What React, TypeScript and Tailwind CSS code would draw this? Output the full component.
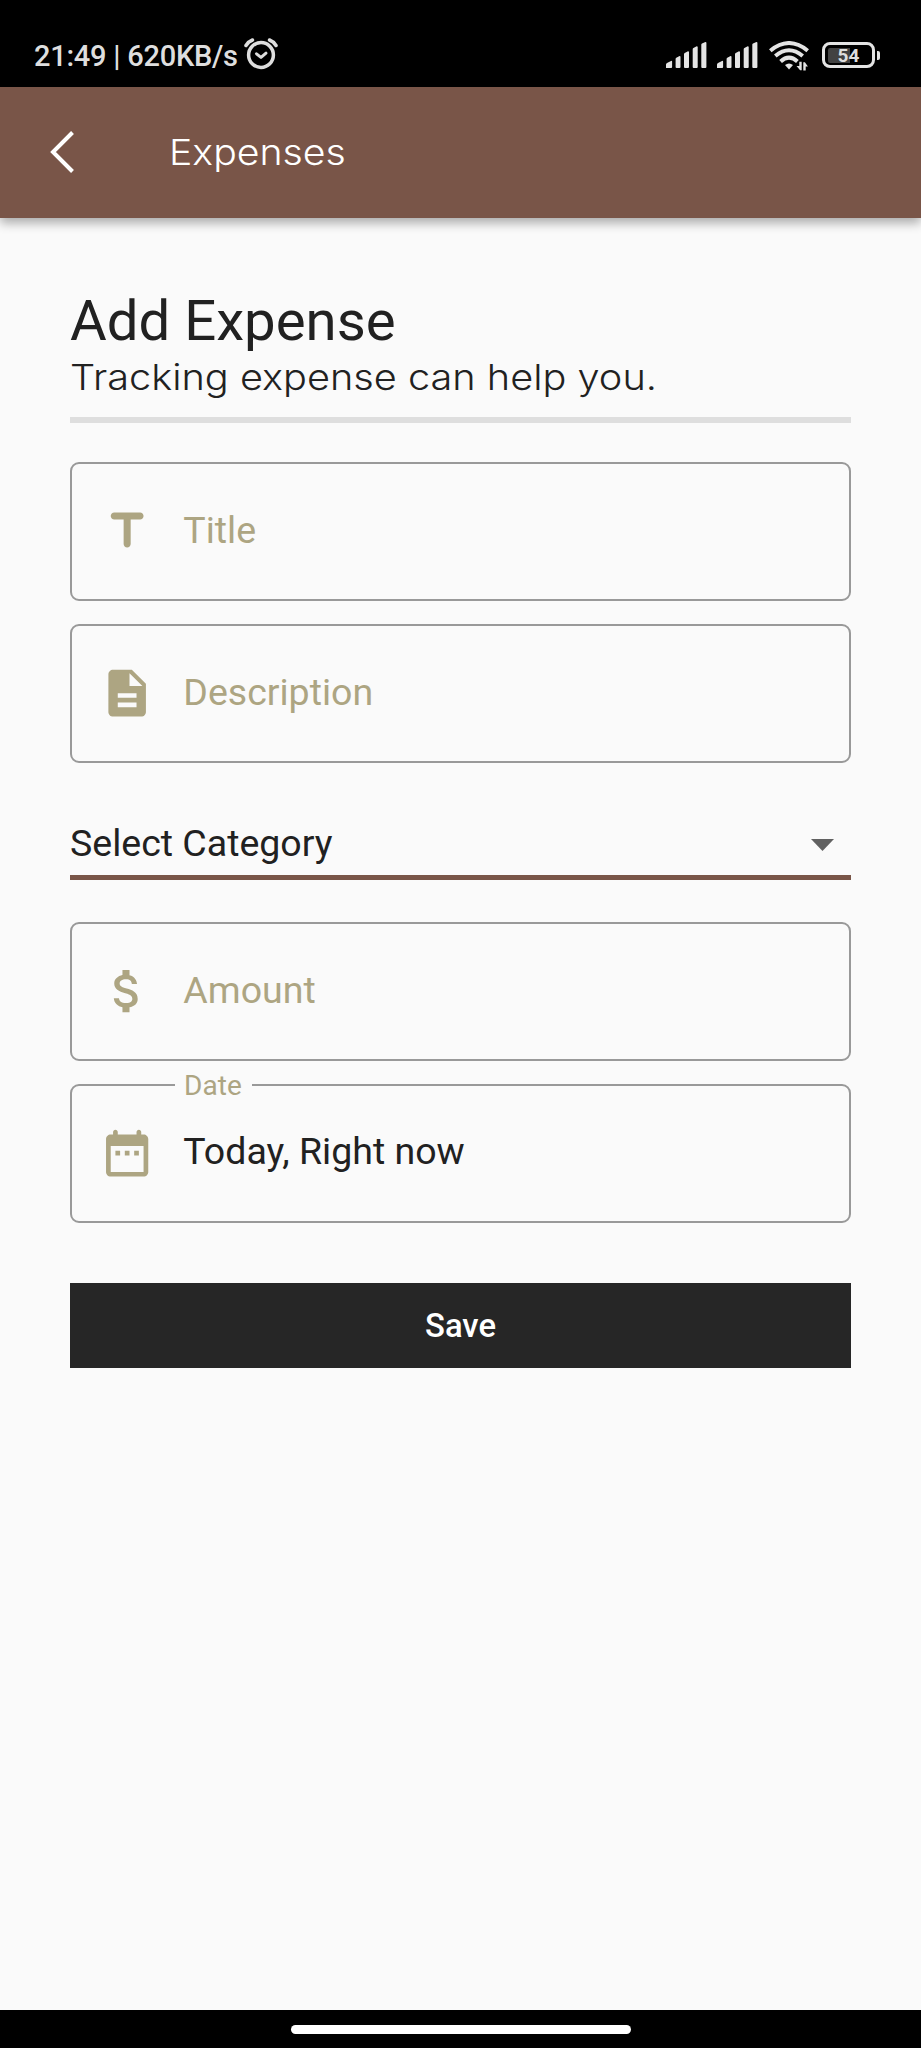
import type { ReactNode } from "react";
import { MdAttachMoney, MdDescription } from "react-icons/md";

function TitleIcon() {
  return (
    <svg viewBox="0 0 24 24" className="size-[56.3px]" fill="currentColor">
      <path d="M5 5.5C5 6.33 5.67 7 6.5 7h4v10.5c0 .83.67 1.5 1.5 1.5s1.5-.67 1.5-1.5V7h4c.83 0 1.5-.67 1.5-1.5S18.330 4 17.500 4h-11C5.670 4 5 4.670 5 5.500z" />
    </svg>
  );
}

function CalendarIcon() {
  return (
    <svg viewBox="0 0 24 24" className="size-[56.3px]" fill="currentColor">
      <path d="M19 4h-1V3c0-.55-.45-1-1-1s-1 .45-1 1v1H8V3c0-.55-.45-1-1-1s-1 .45-1 1v1H5c-1.110 0-2 .9-2 2v14c0 1.100.890 2 2 2h14c1.100 0 2-.9 2-2V6c0-1.100-.9-2-2-2zm0 16H5V9h14v11zM7 11h2v2H7zm4 0h2v2h-2zm4 0h2v2h-2z" />
    </svg>
  );
}

function AlarmIcon() {
  return (
    <svg width="34" height="34" viewBox="0 0 34 34" fill="none" stroke="#dedede" strokeWidth="3.500" strokeLinecap="round">
      <circle cx="17" cy="18" r="12.400" />
      <path d="M12.500 16.800l4.500 3.600 5-4.200" strokeLinejoin="round" strokeWidth="3" />
      <path d="M2 8.500Q4.500 4.500 8.500 3M32 8.500Q29.500 4.500 25.500 3" />
    </svg>
  );
}

function Signal() {
  return (
    <svg width="41" height="27" viewBox="0 0 41 27" fill="#e4e4e4">
      <path d="M0 26v-3.500q0-1 1-1.500l4.500-2.200q.6 0 .6.700V25q0 1-1 1zM9.600 17q0-.8.700-1.200l3.200-1.800q1 0 1 .8V25q0 1-1 1h-2.900q-1 0-1-1zM18 12.200q0-.8.700-1.200l3.300-1.800q1 0 1 .8v15q0 1-1 1h-3q-1 0-1-1zM26.700 7.200q0-.8.700-1.200l3.300-1.800q1 0 1 .8v20q0 1-1 1h-3q-1 0-1-1zM35.300 2.600q0-.8.700-1.200L39.400 0q1 0 1 .8V25q0 1-1 1h-3.100q-1 0-1-1z" />
    </svg>
  );
}

function Wifi() {
  return (
    <svg width="40" height="30" viewBox="0 0 40 30" fill="none" stroke="#e4e4e4" strokeWidth="4">
      <path d="M1.300 9.700Q20-5.600 38.700 9.700" />
      <path d="M6.300 15Q20 3.600 33.700 15" />
      <path d="M11.600 20.400Q20 12.800 28.400 20.400" />
      <path d="M20 28.600l-4-4.600q4-3.200 8 0z" fill="#e4e4e4" stroke="none" />
      <path d="M30.300 20.800h2.400v8.400h-1.600l-3.600-4.200h2.800zM34.300 29.600v-8.400h1.600l3 4.200h-2.200v4.200z" fill="#e4e4e4" stroke="none" />
    </svg>
  );
}

function StatusBar() {
  return (
    <div className="flex h-[87px] shrink-0 items-start justify-between bg-black pl-[34px] pr-[41px] text-[#dedede]">
      <div className="flex items-start">
        <span className="mt-[36px] w-[210px] whitespace-nowrap text-[29px] font-medium leading-[40px] tracking-[-0.25px]">
          21:49 | 620KB/s
        </span>
        <span className="mt-[37px]">
          <AlarmIcon />
        </span>
      </div>
      <div className="flex items-start">
        <span className="mt-[42px] mr-[10px]">
          <Signal />
        </span>
        <span className="mt-[42px] mr-[11px]">
          <Signal />
        </span>
        <span className="mt-[41px] mr-[13px]">
          <Wifi />
        </span>
        <div className="mt-[42px] flex items-center">
          <div className="flex h-[26px] w-[53px] items-center rounded-[8px] border-[3.500px] border-[#e4e4e4] px-[3px]">
            <div className="flex h-[15px] w-[22px] items-center rounded-l-[2px] bg-[#424242] pl-[9.500px] text-[19px] font-bold leading-none">
              54
            </div>
          </div>
          <div className="ml-[2px] h-[9px] w-[3px] rounded-r-[2px] bg-[#e4e4e4]" />
        </div>
      </div>
    </div>
  );
}

function Field({ icon, children, label }: { icon: ReactNode; children: ReactNode; label?: string }) {
  return (
    <div className="relative flex h-[139px] items-center rounded-[9px] border-2 border-[#999999] pl-[26.500px]">
      {label && (
        <span className="absolute left-[103px] top-[-16px] w-[77px] bg-[#fafafa] pl-[9px] text-[28px] leading-[32px] tracking-[0.1px] text-[#ada582]">
          {label}
        </span>
      )}
      <span className="text-[#ada582]">{icon}</span>
      <span className={`ml-[28.500px] text-[37.500px] leading-[44px] ${label ? "pb-[6px]" : "pb-[3px]"}`}>{children}</span>
    </div>
  );
}

export default function App() {
  return (
    <div className="flex h-[2048px] w-[921px] flex-col overflow-hidden bg-[#fafafa] font-['Roboto',sans-serif] text-[#212121]">
      <StatusBar />
      <header className="z-10 flex h-[131px] shrink-0 items-center bg-[#795548] pl-[49px] shadow-[0_5px_10px_rgba(0,0,0,0.32)]">
        <svg className="mb-[2px]" width="26" height="42" viewBox="0 0 26 42" fill="none" stroke="#fff" strokeWidth="4">
          <path d="M23.500 1.500L4 21l19.500 19.500" />
        </svg>
        <h1 className="ml-[94px] origin-left scale-x-[1.105] font-['Inter',sans-serif] text-[35.500px] font-light leading-[44px] text-white">
          Expenses
        </h1>
      </header>

      <main className="flex grow flex-col px-[70px] pt-[70px]">
        <h2 className="text-[56.300px] leading-[66px]">Add Expense</h2>
        <p className="mt-[2px] origin-left scale-x-[1.118] self-start whitespace-nowrap font-['Inter',sans-serif] text-[35.500px] font-light leading-[44px]">
          Tracking expense can help you.
        </p>
        <div className="mt-[17px] h-[6px] bg-[#dedede]" />

        <div className="mt-[39px] flex flex-col gap-[23px]">
          <Field icon={<TitleIcon />}>
            <span className="text-[#ada582]">Title</span>
          </Field>
          <Field icon={<MdDescription className="size-[56.300px]" />}>
            <span className="text-[#ada582]">Description</span>
          </Field>
        </div>

        <div className="mt-[51px] flex h-[66px] items-center justify-between border-b-[5px] border-[#795548] pr-[17px]">
          <span className="pb-[3px] text-[37.500px] leading-[44px]">Select Category</span>
          <svg width="23" height="12" viewBox="0 0 23 12" fill="#616161">
            <path d="M0 0h23L11.500 12z" />
          </svg>
        </div>

        <div className="mt-[42px] flex flex-col gap-[23px]">
          <Field icon={<MdAttachMoney className="size-[56.300px]" />}>
            <span className="text-[#ada582]">Amount</span>
          </Field>
          <Field icon={<CalendarIcon />} label="Date">
            Today, Right now
          </Field>
        </div>

        <button className="mt-[60px] h-[85px] bg-[#262626] text-[32.800px] font-medium leading-[40px] text-white">
          Save
        </button>
      </main>

      <footer className="flex h-[38px] shrink-0 items-start justify-center bg-black pt-[15px]">
        <div className="h-[9px] w-[340px] rounded-full bg-white" />
      </footer>
    </div>
  );
}
